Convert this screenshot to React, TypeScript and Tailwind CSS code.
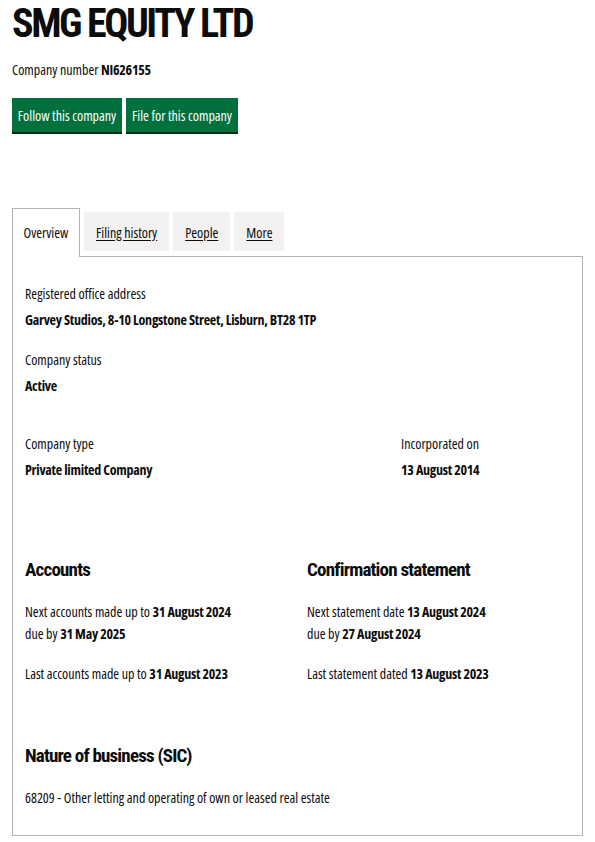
import React from "react"

const body = "font-['Open_Sans',sans-serif] [font-stretch:80%]"
const head = "font-['Roboto_Condensed','Liberation_Sans',sans-serif] [font-stretch:normal]"
const bold = "font-bold tracking-[-0.25px]"

const Field = ({ label, value, className = "" }: { label: string; value: string; className?: string }) => (
  <div className={className}>
    <div className="text-[14px] leading-[22px]">{label}</div>
    <div className={`mt-[4px] text-[14px] leading-[22px] ${bold}`}>{value}</div>
  </div>
)

const Line = ({ children, className = "" }: { children: React.ReactNode; className?: string }) => (
  <p className={`text-[14px] leading-[22px] ${className}`}>{children}</p>
)

const B = ({ children }: { children: React.ReactNode }) => <strong className={bold}>{children}</strong>

const tabs = ["Filing history", "People", "More"]

export default function App() {
  return (
    <div className={`min-h-[842px] w-[595px] bg-white px-[12px] text-[#0b0c0c] ${body}`}>
      <h1 className={`text-[40px] leading-[48px] font-bold tracking-[-2.4px] ${head}`}>SMG EQUITY LTD</h1>
      <p className="mt-[11px] text-[14px] leading-[22px]">
        Company number <B>NI626155</B>
      </p>

      <div className="mt-[17px] flex gap-[4px]">
        <button className="h-[34px] w-[110px] bg-[#00703c] text-[14px] text-white shadow-[0_2px_0_#002d18]">
          Follow this company
        </button>
        <button className="h-[34px] w-[112px] bg-[#00703c] text-[14px] text-white shadow-[0_2px_0_#002d18]">
          File for this company
        </button>
      </div>

      <div className="mt-[76px]">
        <ul className="flex items-end gap-[4px]">
          <li className="relative z-10 -mb-px flex h-[49px] w-[68px] items-start justify-center border border-b-0 border-[#b1b4b6] bg-white pt-[13px]">
            <span className="text-[14px] leading-[22px]">Overview</span>
          </li>
          {tabs.map((t) => (
            <li key={t} className="mb-[5px] flex h-[39px] items-center bg-[#f3f2f1] px-[12px] pt-[2px]">
              <a href="#" className="text-[14px] leading-[22px] underline underline-offset-2">
                {t}
              </a>
            </li>
          ))}
        </ul>

        <div className="h-[580px] border border-[#b1b4b6] px-[12px] pt-[26px]">
          <Field label="Registered office address" value="Garvey Studios, 8-10 Longstone Street, Lisburn, BT28 1TP" />
          <Field className="mt-[18px]" label="Company status" value="Active" />

          <div className="mt-[36px] grid grid-cols-[376px_1fr]">
            <Field label="Company type" value="Private limited Company" />
            <Field label="Incorporated on" value="13 August 2014" />
          </div>

          <div className="mt-[76px] grid grid-cols-[282px_1fr]">
            <div>
              <h2 className={`text-[19px] leading-[26px] font-bold tracking-[-0.8px] ${head}`}>Accounts</h2>
              <Line className="mt-[18px]">
                Next accounts made up to <B>31 August 2024</B>
              </Line>
              <Line>
                due by <B>31 May 2025</B>
              </Line>
              <Line className="mt-[18px]">
                Last accounts made up to <B>31 August 2023</B>
              </Line>
            </div>
            <div>
              <h2 className={`text-[19px] leading-[26px] font-bold tracking-[-0.8px] ${head}`}>Confirmation statement</h2>
              <Line className="mt-[18px]">
                Next statement date <B>13 August 2024</B>
              </Line>
              <Line>
                due by <B>27 August 2024</B>
              </Line>
              <Line className="mt-[18px]">
                Last statement dated <B>13 August 2023</B>
              </Line>
            </div>
          </div>

          <h2 className={`mt-[58px] text-[19px] leading-[26px] font-bold tracking-[-0.8px] ${head}`}>
            Nature of business (SIC)
          </h2>
          <Line className="mt-[18px]">68209 - Other letting and operating of own or leased real estate</Line>
        </div>
      </div>
    </div>
  )
}
